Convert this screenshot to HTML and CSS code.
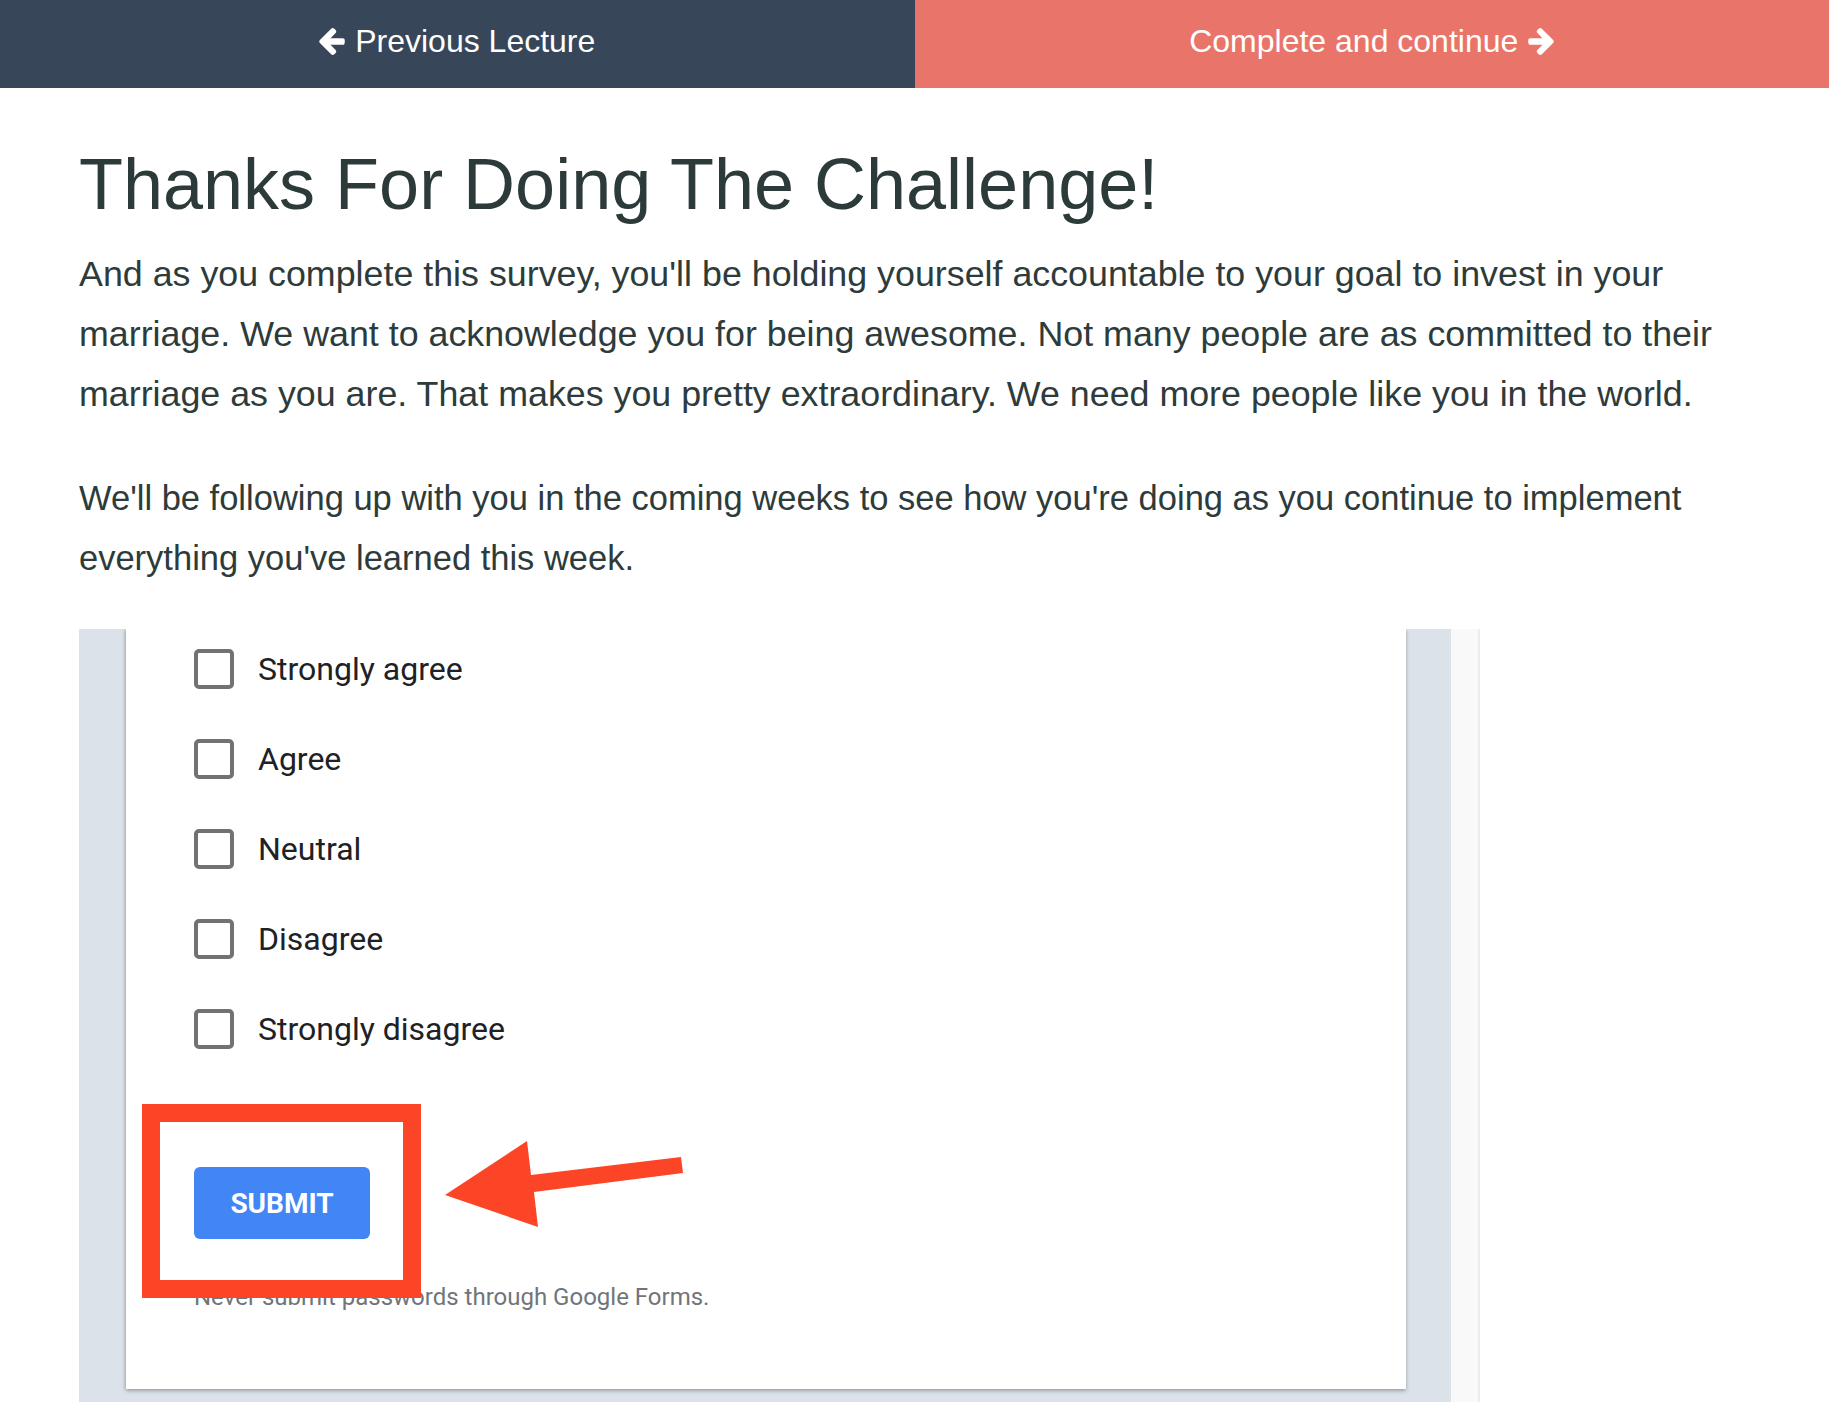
FILE: index.html
```html
<!DOCTYPE html>
<html lang="en">
<head>
  <meta charset="UTF-8">
  <meta name="viewport" content="width=device-width, initial-scale=1.0">
  <title>Thanks For Doing The Challenge!</title>
  <link rel="stylesheet" href="styles.css">
</head>
<body>
  <div class="lecture-nav">
    <a class="nav-btn nav-prev" href="#">
      <svg class="nav-icon" viewBox="192 181 1472 1558"><path d="M1664 896v128q0 53-32.5 90.5t-84.5 37.5h-704l293 294q38 36 38 90t-38 90l-75 76q-37 37-90 37-52 0-91-37l-651-652q-37-37-37-90 0-52 37-91l651-650q38-38 91-38 52 0 90 38l75 74q38 38 38 91t-38 91l-293 293h704q52 0 84.5 37.5t32.5 90.5z"/></svg>
      Previous Lecture
    </a>
    <a class="nav-btn nav-next" href="#">
      Complete and continue
      <svg class="nav-icon" viewBox="192 181 1472 1558"><path transform="translate(1856 0) scale(-1 1)" d="M1664 896v128q0 53-32.5 90.5t-84.5 37.5h-704l293 294q38 36 38 90t-38 90l-75 76q-37 37-90 37-52 0-91-37l-651-652q-37-37-37-90 0-52 37-91l651-650q38-38 91-38 52 0 90 38l75 74q38 38 38 91t-38 91l-293 293h704q52 0 84.5 37.5t32.5 90.5z"/></svg>
    </a>
  </div>

  <div class="lecture-body">
    <h2 class="lecture-title">Thanks For Doing The Challenge!</h2>
    <p class="lecture-text">And as you complete this survey, you'll be holding yourself accountable to your goal to invest in your<br>marriage. We want to acknowledge you for being awesome. Not many people are as committed to their<br>marriage as you are. That makes you pretty extraordinary. We need more people like you in the world.</p>
    <p class="lecture-text lecture-text-sm">We'll be following up with you in the coming weeks to see how you're doing as you continue to implement<br>everything you've learned this week.</p>

    <div class="form-embed">
      <div class="form-bg">
        <div class="form-card">
          <div class="choice"><span class="checkbox"></span><span class="choice-label">Strongly agree</span></div>
          <div class="choice"><span class="checkbox"></span><span class="choice-label">Agree</span></div>
          <div class="choice"><span class="checkbox"></span><span class="choice-label">Neutral</span></div>
          <div class="choice"><span class="checkbox"></span><span class="choice-label">Disagree</span></div>
          <div class="choice"><span class="checkbox"></span><span class="choice-label">Strongly disagree</span></div>

          <button class="submit-btn">SUBMIT</button>
          <p class="form-note">Never submit passwords through Google Forms.</p>

          <!-- annotation drawn over the screenshot -->
          <div class="callout-box"></div>
          <svg class="callout-arrow" viewBox="0 0 250 100"><polygon points="5,61 98,93 94,58 243,39 241,23 91,41 87,7"/></svg>
        </div>
      </div>
      <div class="form-track"></div>
    </div>
  </div>
</body>
</html>
```

FILE: styles.css
```css
body {
  margin: 0;
  padding: 0;
  font-family: "Liberation Sans", Arial, sans-serif;
  background-color: #fff;
  overflow: hidden;
}

.lecture-nav {
  display: flex;
  height: 88px;
}
.nav-btn {
  flex: 1;
  display: flex;
  justify-content: center;
  align-items: center;
  gap: 10px;
  padding-bottom: 6px;
  box-sizing: border-box;
  color: white;
  font-size: 32px;
  text-decoration: none;
}
.nav-prev {
  background-color: #374659;
}
.nav-next {
  background-color: #e9756a;
}
.nav-icon {
  width: 26px;
  height: 27px;
  fill: white;
}

.lecture-body {
  padding: 0 79px;
}
.lecture-title {
  margin: 53px 0 17px;
  font-size: 72px;
  font-weight: normal;
  line-height: 1.2;
  color: #2c3a3a;
}
.lecture-text {
  margin: 0 0 44px;
  font-size: 35.8px;
  line-height: 60px;
  color: #2d3b3b;
  white-space: nowrap;
}
.lecture-text-sm {
  font-size: 34.5px;
  margin-bottom: 41px;
}

.form-embed {
  display: flex;
  width: 1401px;
  height: 780px;
  overflow: hidden;
}
.form-bg {
  width: 1372px;
  padding-left: 47px;
  box-sizing: border-box;
  background-color: #dbe2ea;
}
.form-track {
  width: 27px;
  background-color: #f9f9f9;
  border-right: 2px solid #ececec;
}
.form-card {
  position: relative;
  width: 1280px;
  height: 760px;
  box-sizing: border-box;
  padding: 20px 0 0 68px;
  background-color: white;
  box-shadow: 0 2px 4px rgba(60, 64, 67, 0.35), -1px 0 3px rgba(60, 64, 67, 0.2);
  font-family: Roboto, "Liberation Sans", sans-serif;
}

.choice {
  display: flex;
  align-items: center;
  gap: 24px;
  height: 40px;
  margin-bottom: 50px;
}
.checkbox {
  width: 40px;
  height: 40px;
  box-sizing: border-box;
  border: 4px solid #727272;
  border-radius: 5px;
}
.choice-label {
  font-size: 32px;
  color: #202124;
}

.submit-btn {
  display: block;
  width: 176px;
  height: 72px;
  margin-top: 118px;
  border: none;
  border-radius: 6px;
  background-color: #4285f4;
  color: white;
  font-family: Roboto, sans-serif;
  font-size: 28px;
  font-weight: bold;
  cursor: pointer;
}
.form-note {
  margin: 43px 0 0;
  font-size: 24px;
  line-height: 30px;
  color: #70757a;
}

.callout-box {
  position: absolute;
  left: 16px;
  top: 475px;
  width: 279px;
  height: 194px;
  box-sizing: border-box;
  border: 18px solid #fc4527;
}
.callout-arrow {
  position: absolute;
  left: 314px;
  top: 505px;
  width: 250px;
  height: 100px;
  fill: #fc4527;
}
```
